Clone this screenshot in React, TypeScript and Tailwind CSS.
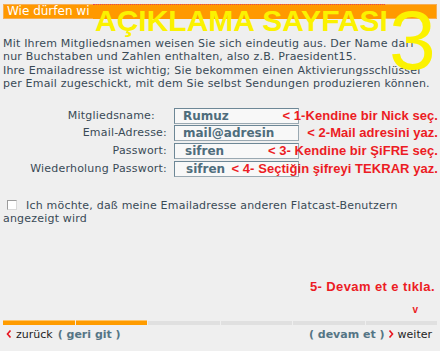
const rows = [
  { label: "Mitgliedsname:", value: "Rumuz", note: "< 1-Kendine bir Nick seç.", extra: true, indent: 8 },
  { label: "Email-Adresse:", value: "mail@adresin", note: "< 2-Mail adresini yaz.", extra: false, indent: 8 },
  { label: "Passwort:", value: "sifren", note: "< 3- Kendine bir ŞiFRE seç.", extra: false, indent: 10 },
  { label: "Wiederholung Passwort:", value: "sifren", note: "< 4- Seçtiğin şifreyi TEKRAR yaz.", extra: false, indent: 11 },
];

const steps = [true, true, false, false, false, false];

function Chevron({ dir }: { dir: "left" | "right" }) {
  return (
    <svg width="6" height="8" viewBox="0 0 6 8" className="shrink-0">
      <polyline
        points={dir === "left" ? "4.5,0.5 1.5,4 4.5,7.5" : "1.5,0.5 4.5,4 1.5,7.5"}
        fill="none"
        stroke="#e8141f"
        strokeWidth="1.6"
      />
    </svg>
  );
}

export default function App() {
  return (
    <div className="relative h-[351px] w-[440px] overflow-hidden bg-[#efefef] font-['DejaVu_Sans',Verdana,sans-serif] text-[#394a56]">
      <div className="mx-[3px] mt-[4px] h-[15px] border border-[#f7ae55] bg-[#ff9900] pl-[3px] text-[12px] leading-[12px] text-white">
        Wie dürfen wi
      </div>

      {/* pasted caption over the header */}
      <div className="absolute left-[93px] top-[4px] h-[15px] w-[292px] border-t border-dotted border-[#e8405a] bg-[#ff9900]" />
      <div className="absolute left-[95px] top-[4px] font-['Liberation_Sans',Arial,sans-serif] text-[30px] font-bold leading-[34px] text-[#fbf200]">
        AÇIKLAMA SAYFASI
      </div>
      <div className="absolute left-[389px] top-[-8px] font-['Liberation_Sans',Arial,sans-serif] text-[84px] leading-[96px] text-[#fbf200]">
        3
      </div>

      <p className="mt-[18px] whitespace-nowrap px-[3px] text-[11px] leading-[13.4px] tracking-[0.2px]">
        Mit Ihrem Mitgliedsnamen weisen Sie sich eindeutig aus. Der Name darf
        <br />
        nur Buchstaben und Zahlen enthalten, also z.B. Praesident15.
        <br />
        Ihre Emailadresse ist wichtig; Sie bekommen einen Aktivierungsschlüssel
        <br />
        per Email zugeschickt, mit dem Sie selbst Sendungen produzieren können.
      </p>

      <div className="mt-[17px] flex flex-col gap-[1.8px]">
        {rows.map((r) => (
          <div key={r.label} className="relative flex h-[16px] items-center">
            <span
              className={`w-[167px] text-right text-[11px] leading-[16px] tracking-[0.2px] ${r.extra ? "pr-[12px]" : ""}`}
            >
              {r.label}
            </span>
            <div
              className="ml-[7px] flex h-[16px] w-[125px] items-center border border-[#6d8796] border-b-[#9aa9b2] border-r-[#9aa9b2] bg-[#f8f8f8] text-[12px] font-bold leading-[14px] text-[#4f6d7c]"
              style={{ paddingLeft: r.indent }}
            >
              {r.value}
            </div>
            <span className="absolute right-[2px] top-0 whitespace-nowrap font-['Liberation_Sans',Arial,sans-serif] text-[13px] font-bold leading-[16px] tracking-[0.05px] text-[#ec1c24]">
              {r.note}
            </span>
          </div>
        ))}
      </div>

      <p className="mt-[22px] px-[3px] text-[11px] leading-[13.3px] tracking-[0.2px]">
        <span className="ml-[4px] mr-[9px] inline-block h-[10px] w-[10px] border border-[#9c9c9c] border-b-[#dadada] border-r-[#dadada] bg-white align-[-1px]" />
        Ich möchte, daß meine Emailadresse anderen Flatcast-Benutzern angezeigt wird
      </p>

      <div className="mt-[53px] pr-[5px] text-right font-['Liberation_Sans',Arial,sans-serif] text-[13px] font-bold leading-[15px] tracking-[0.4px] text-[#ec1c24]">
        5- Devam et e tıkla.
      </div>
      <div className="mt-[11px] pr-[22px] text-right font-['Liberation_Sans',Arial,sans-serif] text-[10px] font-bold leading-[10px] text-[#ec1c24]">
        v
      </div>

      <div className="mx-[3px] mt-[5px] flex items-end gap-[1px]">
        {steps.map((done, i) => (
          <div
            key={i}
            className={done ? "h-[5px] flex-1 border-t border-[#ffc56a] bg-[#ff9c00]" : "h-[4px] flex-1 bg-[#e0e0e0]"}
          />
        ))}
      </div>

      <div className="mt-[3px] flex items-center pl-[6px] pr-[8px] text-[11px] leading-[13px]">
        <Chevron dir="left" />
        <span className="ml-[4px] text-[#1e1e1e]">zurück</span>
        <span className="ml-[5px] font-bold text-[#557585]">( geri git )</span>
        <span className="ml-auto font-bold text-[#557585]">( devam et )</span>
        <span className="ml-[3px]">
          <Chevron dir="right" />
        </span>
        <span className="ml-[4px] text-[#1e1e1e]">weiter</span>
      </div>
    </div>
  );
}
